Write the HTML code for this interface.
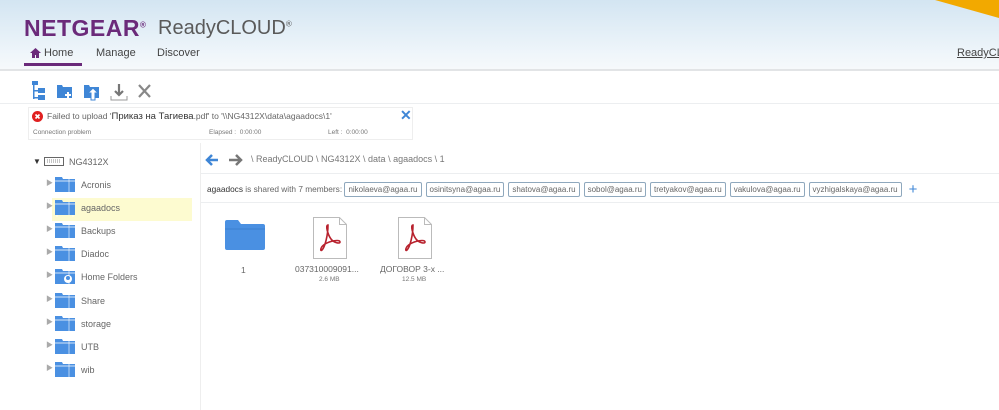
<!DOCTYPE html>
<html><head><meta charset="utf-8"><style>
*{margin:0;padding:0;box-sizing:border-box}
body{width:999px;height:410px;overflow:hidden;background:#fff;font-family:"Liberation Sans","Noto Sans CJK SC",sans-serif;color:#555;position:relative}
.a{position:absolute;white-space:nowrap}
.hdr{position:absolute;left:0;top:0;width:999px;height:71px;background:linear-gradient(#d3e5f2,#eef5fa 75%,#f6f9fb);border-bottom:2px solid #e2e4e6}
.hl{position:absolute;left:0;height:1px;background:#eceef0}
.tag{display:inline-block;border:1px solid #8fa8bd;border-radius:2px;padding:2px 3px;font-size:8px;color:#666;margin-right:4px;background:#fff}
.tr{font-size:9px;color:#666}
</style></head><body>
<div class="hdr"></div>
<svg class="a" style="left:935px;top:0" width="64" height="20"><polygon points="0,0 64,0 64,18" fill="#f2a900"/></svg>
<div class="a" style="left:24px;top:15px;font-size:23px;font-weight:bold;color:#6b2a7a;letter-spacing:0.5px">NETGEAR<sup style="font-size:8px">®</sup></div>
<div class="a" style="left:158px;top:17px;font-size:20px;color:#5a5a5a">ReadyCLOUD<sup style="font-size:8px">®</sup></div>
<svg class="a" style="left:30px;top:48px" width="11" height="10"><path d="M5.5 0L0 5h2v5h3V7h1v3h3V5h2z" fill="#6b2a7a"/></svg>
<div class="a" style="left:44px;top:47px;font-size:11px;color:#444">Home</div>
<div class="a" style="left:24px;top:63px;width:58px;height:3px;background:#6b2a7a"></div>
<div class="a" style="left:96px;top:47px;font-size:11px;color:#444">Manage</div>
<div class="a" style="left:157px;top:47px;font-size:11px;color:#444">Discover</div>
<div class="a" style="left:957px;top:47px;font-size:11px;color:#444;text-decoration:underline">ReadyCLOUD</div>
<svg class="a" style="left:30px;top:80px" width="130" height="22">
<g fill="#3f86d6"><rect x="2" y="1" width="6" height="4"/><rect x="3" y="5" width="1.5" height="14"/><rect x="4" y="10" width="4" height="1.5"/><rect x="4" y="17" width="4" height="1.5"/><rect x="8" y="8" width="7" height="5"/><rect x="8" y="15" width="7" height="5"/>
<path d="M27 5h5l1 2h9v11H27z"/><path d="M54 5h5l1 2h9v11H54z"/></g>
<path d="M38 12v6M35 15h6" stroke="#fff" stroke-width="2"/>
<path d="M61 20V13h-3l5-5 5 5h-3v7z" fill="#fff" stroke="#3f86d6" stroke-width="1"/>
<path d="M89 4v11M85 11l4 4 4-4" stroke="#777" stroke-width="2.2" fill="none"/><path d="M81 16v4h16v-4" stroke="#999" fill="none"/>
<path d="M109 5l11 12M120 5l-11 12" stroke="#888" stroke-width="2.2"/></svg>
<div class="hl" style="top:103px;width:999px"></div>
<div class="a" style="left:28px;top:107px;width:385px;height:33px;border:1px solid #eee;background:#fff"></div>
<svg class="a" style="left:32px;top:111px" width="11" height="11"><circle cx="5.5" cy="5.5" r="5.5" fill="#e02020"/><path d="M3.5 3.5l4 4M7.5 3.5l-4 4" stroke="#fff" stroke-width="1.6"/></svg>
<div class="a" style="left:47px;top:111px;font-size:8.5px;color:#666">Failed to upload '<span style="color:#333;font-size:9.5px">Приказ на Тагиева</span>.pdf' to '\\NG4312X\data\agaadocs\1'</div>
<div class="a" style="left:400px;top:107px;font-size:14px;font-weight:bold;color:#3f86d6">✕</div>
<div class="a" style="left:33px;top:129px;font-size:6.5px;color:#777">Connection problem</div>
<div class="a" style="left:209px;top:129px;font-size:6.5px;color:#777">Elapsed :&nbsp;&nbsp;0:00:00</div>
<div class="a" style="left:328px;top:129px;font-size:6.5px;color:#777">Left :&nbsp;&nbsp;0:00:00</div>
<div class="a" style="left:200px;top:143px;width:1px;height:267px;background:#eee"></div>
<div class="a tr" style="left:33px;top:157px;font-size:8px;color:#333">▼</div>
<svg class="a" style="left:44px;top:157px" width="20" height="9"><rect x="0.5" y="0.5" width="19" height="8" fill="#fff" stroke="#666"/><path d="M3 3h14M3 5h14" stroke="#888" stroke-dasharray="1 1"/></svg>
<div class="a tr" style="left:69px;top:157px">NG4312X</div>
<div class="a" style="left:52px;top:198px;width:140px;height:23px;background:#fdfbd0"></div>
<div id="tree"></div>
<svg class="a" style="left:204px;top:153px" width="40" height="14"><path d="M14 7H3M8 2L3 7l5 5" stroke="#3f86d6" stroke-width="2.5" fill="none"/><path d="M25 7h12M32 2l5 5-5 5" stroke="#777" stroke-width="2.5" fill="none"/></svg>
<div class="a" style="left:251px;top:154px;font-size:9px;color:#777">\ ReadyCLOUD \ NG4312X \ data \ agaadocs \ 1</div>
<div class="hl" style="left:201px;top:173px;width:798px"></div>
<div class="a" style="left:207px;top:181px;font-size:8.3px;color:#666"><span style="color:#333">agaadocs</span> is shared with 7 members: <span class="tag">nikolaeva@agaa.ru</span><span class="tag">osinitsyna@agaa.ru</span><span class="tag">shatova@agaa.ru</span><span class="tag">sobol@agaa.ru</span><span class="tag">tretyakov@agaa.ru</span><span class="tag">vakulova@agaa.ru</span><span class="tag">vyzhigalskaya@agaa.ru</span><span style="color:#3f86d6;font-size:15px;margin-left:3px;vertical-align:-2px">+</span></div>
<div class="hl" style="left:201px;top:202px;width:798px"></div>
<svg class="a" style="left:225px;top:220px" width="40" height="30"><path d="M0 2q0-2 2-2h11l3 4h22q2 0 2 2v22q0 2-2 2H2q-2 0-2-2z" fill="#4a90e2"/><path d="M0 9h40" stroke="#3c7fd0"/></svg>
<div class="a" style="left:241px;top:265px;font-size:8.5px;color:#666">1</div>
<svg class="a" style="left:313px;top:217px" width="34" height="42"><path d="M0.5 0.5h26l7 7v34H0.5z" fill="#fff" stroke="#bbb"/><path d="M26.5 0.5v7h7" fill="none" stroke="#bbb"/><path d="M15 8c-3 0 0 10 3 14 3 4 9 5 9 3 0-3-10-1-15 2-5 3-5 8-3 6 3-3 6-15 6-25z" fill="none" stroke="#b8222e" stroke-width="1.6"/></svg>
<div class="a" style="left:295px;top:264px;font-size:8.5px;color:#666">037310009091...</div>
<div class="a" style="left:319px;top:276px;font-size:6.5px;color:#777">2.6 MB</div>
<svg class="a" style="left:398px;top:217px" width="34" height="42"><path d="M0.5 0.5h26l7 7v34H0.5z" fill="#fff" stroke="#bbb"/><path d="M26.5 0.5v7h7" fill="none" stroke="#bbb"/><path d="M15 8c-3 0 0 10 3 14 3 4 9 5 9 3 0-3-10-1-15 2-5 3-5 8-3 6 3-3 6-15 6-25z" fill="none" stroke="#b8222e" stroke-width="1.6"/></svg>
<div class="a" style="left:380px;top:264px;font-size:8.5px;color:#666">ДОГОВОР 3-х ...</div>
<div class="a" style="left:402px;top:276px;font-size:6.5px;color:#777">12.5 MB</div>
<script>
var n=["Acronis","agaadocs","Backups","Diadoc","Home Folders","Share","storage","UTB","wib"],h="";
n.forEach(function(t,i){var y=176+i*23.1;
h+='<div class="a" style="left:46px;top:'+(y+2)+'px;font-size:7px;color:#aaa">▶</div>';
h+='<svg class="a" style="left:55px;top:'+y+'px" width="20" height="18"><path d="M0 1h7l1 2h12v13H0z" fill="#4a90e2"/><path d="M0 5h20M2 16v2M18 16v2" stroke="#fff" stroke-width="0.8"/><path d="M14 3v13" stroke="#fff" stroke-width="0.6"/>'+(t=="Home Folders"?'<circle cx="13" cy="11" r="4" fill="#fff"/><circle cx="13" cy="10" r="2" fill="#4a90e2"/>':'')+'</svg>';
h+='<div class="a tr" style="left:81px;top:'+(y+4)+'px">'+t+'</div>';});
document.getElementById("tree").innerHTML=h;
</script>
</body></html>
